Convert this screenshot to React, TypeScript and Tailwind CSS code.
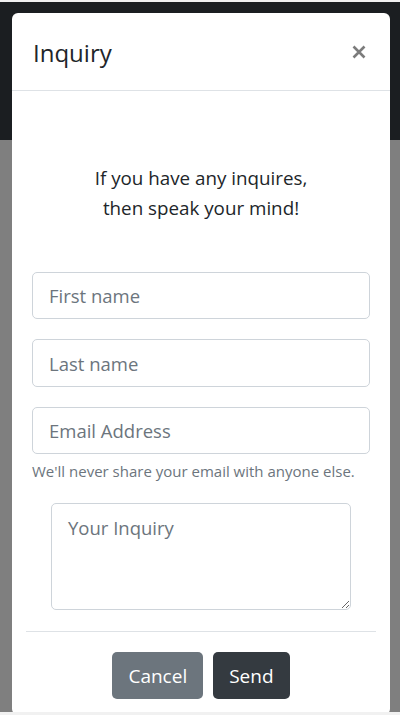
import React from 'react';

export default function App() {
  return (
    <div className="relative w-[400px] h-[715px] overflow-hidden flex flex-col font-['Open_Sans',sans-serif] text-[#212529]">
      <div className="h-[2px] bg-[#f1f1f1]" />
      <div className="h-[138px] bg-[#1b1e21]" />
      <div className="flex-1 bg-[#7f7f7f]" />
      <div className="relative z-10 h-[3px] bg-[#f1f1f1]" />

      {/* modal */}
      <div className="absolute left-[12px] top-[13px] w-[378px] bg-white rounded-[6px] flex flex-col">
        <div className="h-[78px] border-b border-[#dee2e6] flex items-center justify-between pl-[21px] pr-[24px]">
          <h4 className="text-[24px] leading-[29px] pt-[1px]">Inquiry</h4>
          <button className="w-[14px] h-[14px] flex items-center justify-center">
            <svg width="14" height="14" viewBox="0 0 14 14">
              <path d="M1.5 1.5 L12.5 12.5 M12.5 1.5 L1.5 12.5" stroke="#7c7c7c" strokeWidth="2.6" />
            </svg>
          </button>
        </div>

        <p className="mt-[72px] text-center text-[18.8px] leading-[30px]">
          If you have any inquires,
          <br />
          then speak your mind!
        </p>

        <form className="mt-[49px] px-[20px] flex flex-col">
          <input
            type="text"
            placeholder="First name"
            className="h-[47px] w-full border border-[#ced4da] rounded-[5px] px-[16px] text-[18.5px] placeholder:text-[#6c757d] outline-none"
          />
          <input
            type="text"
            placeholder="Last name"
            className="mt-[20px] h-[48px] w-full border border-[#ced4da] rounded-[5px] px-[16px] text-[18.5px] placeholder:text-[#6c757d] outline-none"
          />
          <input
            type="email"
            placeholder="Email Address"
            className="mt-[20px] h-[47px] w-full border border-[#ced4da] rounded-[5px] px-[16px] text-[18.5px] placeholder:text-[#6c757d] outline-none"
          />
          <small className="mt-[5px] text-[15px] leading-[24px] text-[#6c757d] whitespace-nowrap">
            We'll never share your email with anyone else.
          </small>
          <textarea
            placeholder="Your Inquiry"
            className="mt-[20px] mx-[19px] h-[107px] border border-[#ced4da] rounded-[5px] px-[16px] py-[9px] text-[18.5px] leading-[30px] placeholder:text-[#6c757d] outline-none"
          />
        </form>

        <div className="mt-[21px] mx-[14px] border-t border-[#dee2e6] pt-[20px] pb-[16px] flex justify-center gap-[10px]">
          <button className="h-[47px] px-[16px] pt-[2px] rounded-[5px] bg-[#6c757d] text-white text-[19px]">Cancel</button>
          <button className="h-[47px] px-[16px] pt-[2px] rounded-[5px] bg-[#343a40] text-white text-[19px]">Send</button>
        </div>
      </div>
    </div>
  );
}
